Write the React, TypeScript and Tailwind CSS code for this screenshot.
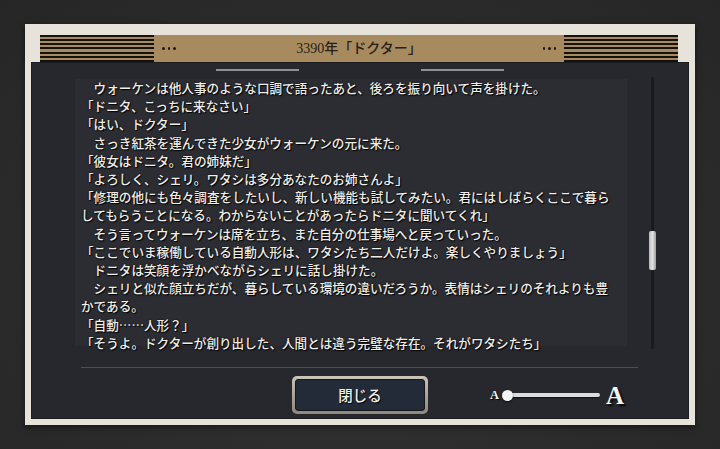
import React from 'react';

const lines: string[] = [
  '　ウォーケンは他人事のような口調で語ったあと、後ろを振り向いて声を掛けた。',
  '「ドニタ、こっちに来なさい」',
  '「はい、ドクター」',
  '　さっき紅茶を運んできた少女がウォーケンの元に来た。',
  '「彼女はドニタ。君の姉妹だ」',
  '「よろしく、シェリ。ワタシは多分あなたのお姉さんよ」',
  '「修理の他にも色々調査をしたいし、新しい機能も試してみたい。君にはしばらくここで暮ら',
  'してもらうことになる。わからないことがあったらドニタに聞いてくれ」',
  '　そう言ってウォーケンは席を立ち、また自分の仕事場へと戻っていった。',
  '「ここでいま稼働している自動人形は、ワタシたち二人だけよ。楽しくやりましょう」',
  '　ドニタは笑顔を浮かべながらシェリに話し掛けた。',
  '　シェリと似た顔立ちだが、暮らしている環境の違いだろうか。表情はシェリのそれよりも豊',
  'かである。',
  '「自動……人形？」',
  '「そうよ。ドクターが創り出した、人間とは違う完璧な存在。それがワタシたち」',
];

// 見出しの横じま
function Stripes() {
  return (
    <div className="flex h-full w-[114px] flex-col justify-between py-0">
      {Array.from({ length: 7 }).map((_, i) => (
        <div key={i} className="h-[2px] bg-[#15120e]" />
      ))}
    </div>
  );
}

function Dots() {
  return (
    <div className="flex items-center gap-[3px]">
      <span className="h-[2.5px] w-[2.5px] rounded-full bg-[#1d1812]" />
      <span className="h-[2.5px] w-[2.5px] rounded-full bg-[#1d1812]" />
      <span className="h-[2.5px] w-[2.5px] rounded-full bg-[#1d1812]" />
    </div>
  );
}

export default function App() {
  return (
    <div className="h-[449px] w-[720px] overflow-hidden bg-[radial-gradient(ellipse_at_50%_60%,#383838_0%,#2c2c2c_55%,#262626_100%)] pl-[25px] pt-[24px]">
      {/* 枠 */}
      <div className="flex h-[401px] w-[670px] flex-col bg-[#e7e3db] pt-[11px] pb-[6px] shadow-[0_2px_6px_rgba(0,0,0,0.5)]">
        {/* 見出し */}
        <div className="ml-[15px] mr-[17px] flex h-[27px] items-center bg-[#a78b5f]">
          <Stripes />
          <div className="ml-[8px]">
            <Dots />
          </div>
          <div className="flex-1 text-center text-[14px] font-medium leading-none text-[#2a2118] [font-family:'Liberation_Serif','Noto_Sans_CJK_JP',serif]">
            3390年「ドクター」
          </div>
          <div className="mr-[8px]">
            <Dots />
          </div>
          <Stripes />
        </div>

        {/* 本文パネル */}
        <div className="mx-[6px] flex flex-1 flex-col border border-[#1c1d21] bg-[#26282e]">
          <div className="mt-[6px] flex justify-center gap-[122px]">
            <div className="h-[2px] w-[83px] bg-[#8e8f93]" />
            <div className="h-[2px] w-[83px] bg-[#8e8f93]" />
          </div>

          <div className="mt-[8px] flex">
            <div className="ml-[43px] h-[267px] w-[552px] bg-[#2b2d33] pl-[6px] text-[12.6px] font-medium leading-[18.2px] text-[#f1eee8] [font-family:'Noto_Sans_CJK_JP',sans-serif] [text-shadow:1px_1px_1px_#000,0_0_2px_rgba(0,0,0,0.8)]">
              {lines.map((l, i) => (
                <div key={i} className="whitespace-nowrap">
                  {l}
                </div>
              ))}
            </div>
            {/* スクロールバー */}
            <div className="relative -mt-[2px] ml-[22px] h-[272px] w-[7px]">
              <div className="mx-auto h-full w-[3px] rounded-full bg-[#1a1b20]" />
              <div className="absolute left-0 top-[154px] h-[39px] w-[7px] rounded-[2px] bg-linear-to-r from-[#b9b9b9] via-[#e2e2e2] to-[#9d9d9d]" />
            </div>
          </div>

          <div className="ml-[49px] mt-[18px] h-[1px] w-[557px] bg-[#4c4e56]" />

          <div className="mt-[8px] grid grid-cols-[1fr_auto_1fr] items-center">
            <div />
            <div className="h-[38px] w-[136px] rounded-[5px] bg-linear-to-b from-[#c9c5b9] via-[#a9a497] to-[#8d897d] p-[3px]">
              <div className="flex h-full w-full items-center justify-center rounded-[3px] border border-[#14171d] bg-[#232b39] text-[14.5px] font-medium text-[#f4f1ea] [font-family:'Noto_Sans_CJK_JP',sans-serif] [text-shadow:1px_1px_1px_#000]">
                閉じる
              </div>
            </div>
            <div className="flex items-center pl-[62px] [font-family:'Liberation_Serif',serif]">
              <span className="text-[12.5px] font-bold leading-none text-[#f2f2f2] [text-shadow:1px_1px_1px_#000]">A</span>
              <div className="relative ml-[3px] flex w-[100px] items-center">
                <div className="ml-[4px] h-[4px] w-[94px] rounded-full bg-[#dcdcdc] shadow-[0_1px_1px_rgba(0,0,0,0.6)]" />
                <div className="absolute left-0 h-[11px] w-[11px] rounded-full bg-[#f4f4f4] shadow-[0_1px_2px_rgba(0,0,0,0.7)]" />
              </div>
              <span className="ml-[4px] text-[25px] font-bold leading-none text-[#f4f4f4] [text-shadow:2px_2px_2px_#000]">A</span>
            </div>
          </div>
        </div>
      </div>
    </div>
  );
}
